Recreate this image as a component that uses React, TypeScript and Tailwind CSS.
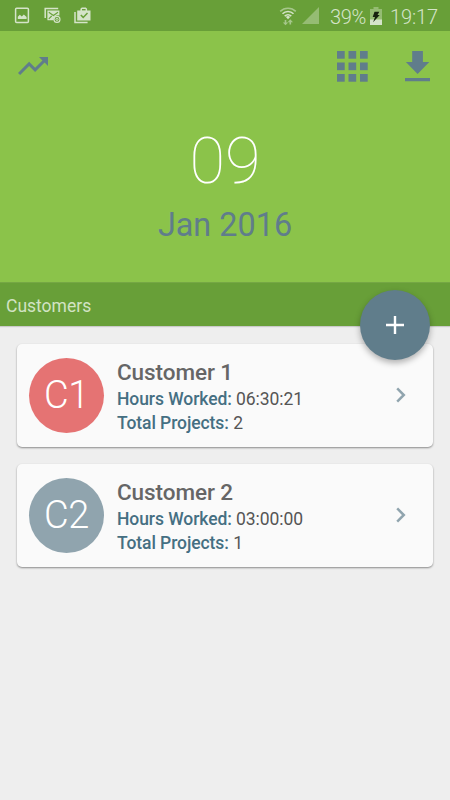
import React from "react";

const customers = [
  { id: 1, initials: "C1", name: "Customer 1", hours: "06:30:21", projects: 2, color: "bg-[#e57373]" },
  { id: 2, initials: "C2", name: "Customer 2", hours: "03:00:00", projects: 1, color: "bg-[#90a4ae]" },
];

const gridOffsets = [0, 11.5, 23];

const StatusBar = () => {
  return (
    <div className="flex h-[31px] items-center bg-[#689f38] text-[#d5e4c9]">
      {/* Notifications */}
      <svg className="ml-[14px]" width="16" height="17" viewBox="0 0 16 17" fill="none">
        <rect x="1.6" y="1.2" width="12.8" height="14.2" rx="1" stroke="currentColor" strokeWidth="1.5" />
        <path d="M3.8 12V9.8l2-2 2 1.8 2-2.2 2.8 2.5V12z" fill="currentColor" />
      </svg>
      <svg className="ml-[14px]" width="18" height="17" viewBox="0 0 18 17" fill="none">
        <path d="M1.2 11V1.5h13" stroke="currentColor" strokeWidth="1.5" />
        <path d="M3.4 3.6h12v5a4.1 4.1 0 0 0-5.6 4.6H3.4z" fill="currentColor" />
        <path d="M4.8 5.3l4.6 3.2L14 5.3M4.8 11.8L7.7 9" stroke="#689f38" strokeWidth="1.1" />
        <circle cx="13" cy="12.4" r="3" stroke="currentColor" strokeWidth="1.1" />
        <circle cx="13" cy="12.4" r="1.1" stroke="currentColor" strokeWidth="0.9" />
      </svg>
      <svg className="ml-[12px]" width="18" height="17" viewBox="0 0 18 17" fill="none">
        <path d="M1 5v10.4H13.6" stroke="currentColor" strokeWidth="1.5" />
        <path d="M3.2 3.4h3.2V1.8L7.8.6h4l1.3 1.2v1.6h3.4v10H3.2z" fill="currentColor" />
        <path d="M8 2h3.6v1.4H8z" fill="#689f38" />
        <path d="M6.8 8l2.4 2.4 4.3-4.4" stroke="#689f38" strokeWidth="1.5" />
      </svg>

      {/* Connection, battery and clock */}
      <svg className="ml-auto" width="18" height="20" viewBox="0 0 18 20" fill="none">
        <path d="M1.2 5.4a11 11 0 0 1 15.6 0" stroke="#a6c78b" strokeWidth="1.5" />
        <path d="M3.5 7.8a7.8 7.8 0 0 1 11 0M5.7 10.2a4.8 4.8 0 0 1 6.6 0" stroke="currentColor" strokeWidth="1.6" />
        <path d="M9 13.3l-2.1-2.2a3 3 0 0 1 4.2 0z" fill="currentColor" />
        <path d="M6.5 14v3M11.3 18.6v-3" stroke="#a6c78b" strokeWidth="1.6" />
        <path d="M3.8 16.4h5.4l-2.7 2.9zM8.6 16.2H14l-2.7-2.9z" fill="#a6c78b" />
      </svg>
      <svg className="ml-[5px]" width="17" height="17" viewBox="0 0 17 17">
        <path d="M0 17L17 0v17z" fill="#95bc73" />
      </svg>
      <span className="ml-[11px] mt-[2px] w-[36px] whitespace-nowrap text-[20px] font-light leading-none tracking-[-0.4px]">39%</span>
      <svg className="ml-[4px]" width="12" height="18" viewBox="0 0 12 18">
        <path d="M3.5 0h5v2H12v16H0V2h3.5z" fill="#95bc73" />
        <path d="M0 12.5h12V18H0z" fill="currentColor" />
        <path d="M4.5 4.7h4.8L7.5 8h2.2l-6.6 7.3L5 10H2.7z" fill="#17210f" />
      </svg>
      <span className="ml-[8px] mr-[13px] mt-[2px] w-[47px] whitespace-nowrap text-[20px] font-light leading-none tracking-[-0.1px]">19:17</span>
    </div>
  );
};

const Header = () => {
  return (
    <header className="h-[251px] bg-[#8bc34a] text-[#607d8b]">
      <div className="flex h-[70px] items-center pl-[15px] pr-[20px]">
        <svg className="h-9 w-9" viewBox="0 0 24 24" fill="currentColor">
          <path d="M16 6l2.29 2.29-4.88 4.88-4-4L2 16.59 3.41 18l6-6 4 4 6.3-6.29L22 12V6z" />
        </svg>
        <svg className="ml-auto" width="31" height="31" viewBox="0 0 31 31" fill="currentColor">
          {gridOffsets.map((y) =>
            gridOffsets.map((x) => <rect key={`${x}-${y}`} x={x} y={y} width="7.7" height="7.7" />)
          )}
        </svg>
        <svg className="ml-[37px]" width="25" height="31" viewBox="0 0 25 31" fill="currentColor">
          <path d="M7.2 0h10.7v11h6.4L12.6 23 .9 11h6.3zM0 27h25v3.3H0z" />
        </svg>
      </div>
      <div className="pt-[25px] text-center">
        <div className="text-[65px] font-thin leading-[70px] text-white">09</div>
        <div className="mt-[10px] text-[32.4px] leading-[38px]">Jan 2016</div>
      </div>
    </header>
  );
};

const CustomerCard = ({ customer }: { customer: (typeof customers)[number] }) => {
  return (
    <div className="flex h-[103px] items-center rounded-[5px] bg-[#fafafa] pl-3 pr-[26px] shadow-[0_1px_2px_rgba(0,0,0,0.42)]">
      <div className={`-mt-px flex h-[75px] w-[75px] items-center justify-center rounded-full text-[38px] font-light tracking-[-0.3px] text-white ${customer.color}`}>
        {customer.initials}
      </div>
      <div className="ml-[13px] pt-[2px] text-[17.5px] leading-6 tracking-[-0.07px] text-[#555]">
        <h2 className="text-[22.5px] font-medium leading-[29px] text-[#666]">{customer.name}</h2>
        <p>
          <span className="font-medium text-[#456f82]">Hours Worked:</span> {customer.hours}
        </p>
        <p>
          <span className="font-medium text-[#456f82]">Total Projects:</span> {customer.projects}
        </p>
      </div>
      <svg className="-mt-[2px] ml-auto" width="12" height="16" viewBox="0 0 12 16" fill="none" stroke="#90a4ae" strokeWidth="2.5">
        <path d="M2.2 1.4L8.8 8l-6.6 6.6" />
      </svg>
    </div>
  );
};

const App = () => {
  return (
    <div className="h-[800px] w-[450px] overflow-hidden bg-[#eee] font-[Roboto,sans-serif]">
      <StatusBar />
      <Header />

      <div className="relative flex h-11 items-center border-t border-[#75a744] bg-[#689f38] pl-[6px] pt-[3px] text-[17.5px] text-[#d2e3c4] shadow-[0_1px_1px_rgba(0,0,0,0.15)]">
        Customers
        <button className="absolute right-[20px] top-[7px] flex h-[70px] w-[70px] items-center justify-center rounded-full bg-[#607d8b] shadow-[0_3px_6px_rgba(0,0,0,0.3)]">
          <svg width="18" height="18" viewBox="0 0 18 18" stroke="#fff" strokeWidth="2.4">
            <path d="M9 0v18M0 9h18" />
          </svg>
        </button>
      </div>

      <main className="flex flex-col gap-[17px] px-[17px] pt-[18px]">
        {customers.map((customer) => (
          <CustomerCard key={customer.id} customer={customer} />
        ))}
      </main>
    </div>
  );
};

export default App;
